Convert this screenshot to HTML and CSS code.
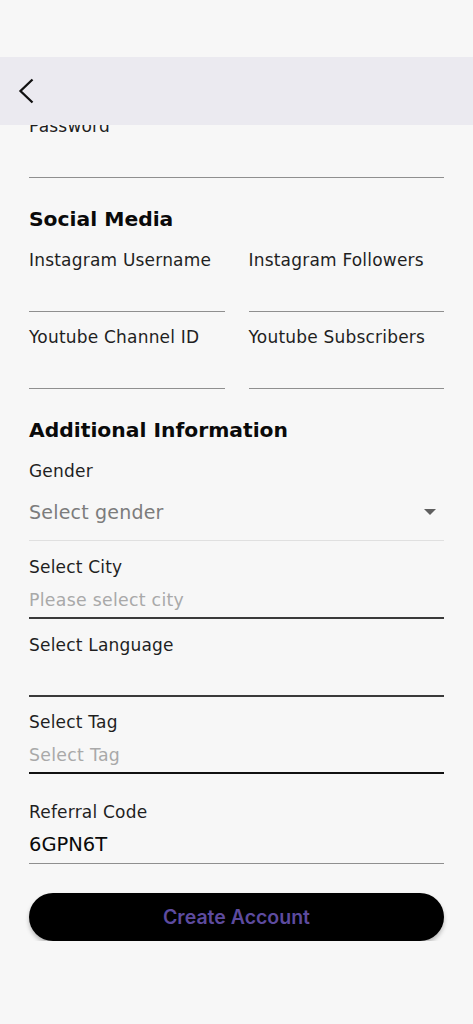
FILE: index.html
```html
<!DOCTYPE html>
<html lang="en">
<head>
    <meta charset="utf-8">
    <meta name="viewport" content="width=device-width, initial-scale=1.0">
    <title>Create Account</title>
    <link rel="stylesheet" href="styles.css">
</head>
<body>
    <div class="status"></div>
    <header class="appbar">
        <button class="back" aria-label="Back">
            <svg width="28" height="28" viewBox="0 0 28 28"><path d="M20.5 2.5 L8.5 14 L20.5 25.5" fill="none" stroke="#111" stroke-width="2.3"/></svg>
        </button>
    </header>
    <main class="content">
        <form class="form">
            <div class="field">
                <label class="label">Password</label>
                <div class="input"></div>
            </div>

            <h2 class="section">Social Media</h2>
            <div class="pair">
                <div class="field">
                    <label class="label">Instagram Username</label>
                    <div class="input"></div>
                </div>
                <div class="field">
                    <label class="label">Instagram Followers</label>
                    <div class="input"></div>
                </div>
            </div>
            <div class="pair">
                <div class="field">
                    <label class="label">Youtube Channel ID</label>
                    <div class="input"></div>
                </div>
                <div class="field">
                    <label class="label">Youtube Subscribers</label>
                    <div class="input"></div>
                </div>
            </div>

            <h2 class="section">Additional Information</h2>
            <div class="field">
                <label class="label">Gender</label>
                <div class="select">
                    <span class="select-hint">Select gender</span>
                    <span class="caret"></span>
                </div>
            </div>
            <div class="field city">
                <label class="label">Select City</label>
                <div class="input dark"><span class="hint">Please select city</span></div>
            </div>
            <div class="field language">
                <label class="label">Select Language</label>
                <div class="input dark"></div>
            </div>
            <div class="field">
                <label class="label">Select Tag</label>
                <div class="input black"><span class="hint">Select Tag</span></div>
            </div>
            <div class="field referral">
                <label class="label">Referral Code</label>
                <div class="input"><span class="value">6GPN6T</span></div>
            </div>

            <button type="button" class="submit">Create Account</button>
        </form>
    </main>
</body>
</html>
```

FILE: styles.css
```css
html, body {
    margin: 0;
    background-color: #f7f7f7;
}
body {
    font-family: "DejaVu Sans", sans-serif;
    color: #1c1c1c;
    width: 473px;
    height: 1024px;
    overflow: hidden;
}
.status {
    height: 57px;
}
.appbar {
    height: 68px;
    background-color: #ebeaf0;
    display: flex;
    align-items: center;
    padding-left: 12px;
    position: relative;
    z-index: 1;
}
.back {
    border: none;
    background: none;
    padding: 0;
    width: 28px;
    height: 28px;
}
.back svg {
    display: block;
}
.content {
    overflow: hidden;
}
.form {
    margin-top: -11px;
    padding: 0 29px;
    display: flex;
    flex-direction: column;
    gap: 13px;
}
.section {
    margin: 14px 0 2px;
    font-size: 20.3px;
    line-height: 28px;
    font-weight: bold;
    color: #0a0a0a;
}
.pair {
    display: grid;
    grid-template-columns: 1fr 1fr;
    gap: 24px;
}
.label {
    display: block;
    font-size: 17px;
    line-height: 24px;
    letter-spacing: 0.2px;
    color: #1f1f1f;
    white-space: nowrap;
}
.input {
    height: 40px;
    border-bottom: 1px solid #8f8f8f;
    box-sizing: border-box;
    display: flex;
    align-items: flex-end;
    padding-bottom: 6px;
}
.input.dark {
    border-bottom: 2px solid #3a3a3a;
}
.input.black {
    border-bottom: 2px solid #111;
}
.hint {
    font-size: 17.3px;
    line-height: 22px;
    color: #a9a9a9;
    letter-spacing: 0.3px;
}
.value {
    font-size: 19.5px;
    line-height: 26px;
    color: #0a0a0a;
    margin-bottom: -1px;
}
.select {
    height: 58px;
    border-bottom: 1px solid #e0e0e0;
    box-sizing: border-box;
    display: flex;
    align-items: center;
    justify-content: space-between;
    padding-right: 8px;
}
.select-hint {
    font-size: 19px;
    color: #7c7c7c;
    letter-spacing: 0.2px;
}
.caret {
    width: 0;
    height: 0;
    border-left: 6px solid transparent;
    border-right: 6px solid transparent;
    border-top: 6px solid #5f5f5f;
}
.city, .language {
    margin-top: 1px;
}
.referral {
    margin-top: 13px;
}
.submit {
    margin-top: 16px;
    height: 48px;
    border: none;
    border-radius: 24px;
    background-color: #000;
    color: #5d4b9f;
    font-family: Inter, sans-serif;
    font-size: 19.5px;
    font-weight: 600;
    box-shadow: 0 3px 4px rgba(0, 0, 0, 0.25);
}
```
